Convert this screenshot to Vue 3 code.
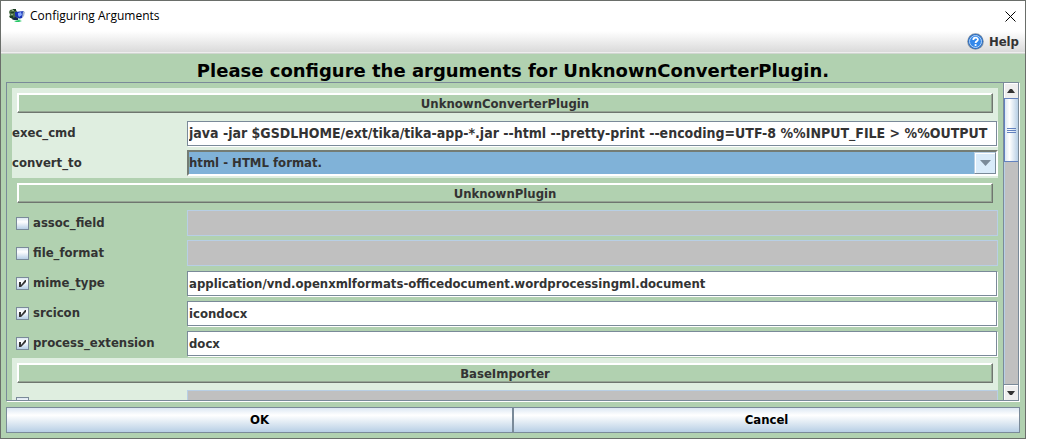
<script setup>
import { reactive, ref } from 'vue'

const groups = reactive([
  {
    name: 'UnknownConverterPlugin',
    tinted: true,
    rows: [
      {
        id: 'exec_cmd',
        kind: 'command',
        required: true,
        value: 'java -jar $GSDLHOME/ext/tika/tika-app-*.jar --html --pretty-print --encoding=UTF-8 %%INPUT_FILE > %%OUTPUT',
      },
      { id: 'convert_to', kind: 'select', required: true, value: 'html - HTML format.' },
    ],
  },
  {
    name: 'UnknownPlugin',
    tinted: false,
    rows: [
      { id: 'assoc_field', kind: 'text', on: false, value: '' },
      { id: 'file_format', kind: 'text', on: false, value: '' },
      {
        id: 'mime_type',
        kind: 'text',
        on: true,
        value: 'application/vnd.openxmlformats-officedocument.wordprocessingml.document',
      },
      { id: 'srcicon', kind: 'text', on: true, value: 'icondocx' },
      { id: 'process_extension', kind: 'text', on: true, value: 'docx' },
    ],
  },
  {
    name: 'BaseImporter',
    tinted: true,
    rows: [{ id: 'base_option', label: '', kind: 'text', on: false, value: '' }],
  },
])

const body = ref(null)
const scroll = (delta) => body.value.scrollBy({ top: delta })
</script>

<template>
  <main class="window">
    <header class="titlebar">
      <svg class="app-icon" viewBox="0 0 16 16" aria-hidden="true">
        <path d="M1 2l4-1 2 1 2 3-2 6-3 1-2-2-2-1 1-2-1-3z" fill="#476b45" />
        <path d="M1 4h4v1H2zM1 8h3v2H1zM4 1h3v2H4z" fill="#1d3f24" />
        <path d="M3 2h2v1H3zM2 6h2v1H2z" fill="#8fae86" />
        <path d="M6 4l9-1v3l-2 4-3 1-4-3z" fill="#1733b8" />
        <path d="M9 5l3-1 1 3-3 2-1-2z" fill="#86a8ff" />
        <path d="M14 3l2 1-1 4-2 2z" fill="#a9b7cf" />
        <path d="M3 10l4-1 4 2-2 1H5z" fill="#15294d" />
        <path d="M5 13l5-1 3 1-3 1H7z" fill="#27c767" />
        <path d="M9 10l3 1-1 1H9z" fill="#b8efd0" />
      </svg>
      <span class="title">Configuring Arguments</span>
      <button class="close" type="button" aria-label="Close">
        <svg viewBox="0 0 11 11"><path d="M.5.5l10 10M10.5.5l-10 10" stroke="#000" fill="none" /></svg>
      </button>
    </header>

    <nav class="menubar">
      <button class="help" type="button">
        <svg viewBox="0 0 17 17" aria-hidden="true">
          <circle cx="8.5" cy="8.5" r="8.3" fill="#8795a5" />
          <circle cx="8.5" cy="8.5" r="7.5" fill="#2b6fc4" />
          <circle cx="8.5" cy="8.5" r="6" fill="#3388ea" stroke="#b5d5fa" stroke-width="1" />
          <path d="M6.3 7c0-3.2 4.6-3 4.6-.4 0 1.7-2.3 1.7-2.3 3.3" fill="none" stroke="#fff" stroke-width="1.8" />
          <circle cx="8.6" cy="12" r="1.1" fill="#fff" />
        </svg>
        Help
      </button>
    </nav>

    <section class="content">
      <h1>Please configure the arguments for UnknownConverterPlugin.</h1>

      <div class="pane">
        <div ref="body" class="pane-body">
          <section
            v-for="g in groups"
            :key="g.name"
            class="group"
            :class="{ tinted: g.tinted }"
            :aria-labelledby="g.name"
          >
            <div class="group-head"><h2 :id="g.name">{{ g.name }}</h2></div>
            <div v-for="r in g.rows" :key="r.id" class="row">
              <label v-if="r.required" class="name" :for="r.id">{{ r.id }}</label>
              <label v-else class="name optional">
                <span class="tick">
                  <input v-model="r.on" type="checkbox" :aria-label="r.id" />
                  <svg v-if="r.on" viewBox="0 0 13 13" aria-hidden="true">
                    <path d="M3 5h2v3L9 3h1v2L5 10H3z" fill="#333" />
                  </svg>
                </span>
                {{ r.label ?? r.id }}
              </label>

              <div v-if="r.kind === 'select'" class="combo">
                <select :id="r.id" v-model="r.value">
                  <option>html - HTML format.</option>
                </select>
                <span class="combo-arrow">
                  <svg viewBox="0 0 11 6" aria-hidden="true"><path d="M0 0h11L5.5 6z" fill="#7a8a99" /></svg>
                </span>
              </div>
              <input
                v-else
                :id="r.id"
                v-model="r.value"
                class="field"
                :class="{ command: r.kind === 'command' }"
                type="text"
                :aria-label="r.id"
                :disabled="!r.required && !r.on"
              />
            </div>
          </section>
        </div>

        <div class="scrollbar">
          <button class="step up" type="button" aria-label="Scroll up" @click="scroll(-30)">
            <svg viewBox="0 0 8 4"><path d="M3 0h2l3 4H0z" fill="#333" /></svg>
          </button>
          <div class="track"><div class="thumb"><i></i><i></i><i></i></div></div>
          <button class="step down" type="button" aria-label="Scroll down" @click="scroll(30)">
            <svg viewBox="0 0 8 4"><path d="M0 0h8L5 4H3z" fill="#333" /></svg>
          </button>
        </div>
      </div>

      <footer class="actions">
        <button type="button">OK</button>
        <button type="button">Cancel</button>
      </footer>
    </section>
  </main>
</template>

<style>
body {
  margin: 0;
  background: #fff;
}
</style>

<style scoped>
* {
  box-sizing: border-box;
}
.window {
  display: flex;
  flex-direction: column;
  height: 100vh;
  margin-right: 23px;
  border: 1px solid #6a6e6a;
  background: #b1d1b0;
  color: #333;
  font: bold 13px/16px "DejaVu Sans Condensed", "DejaVu Sans", sans-serif;
}
button,
input,
select {
  margin: 0;
  border: 0;
  padding: 0;
  border-radius: 0;
  background: none;
  color: inherit;
  font: inherit;
}
svg {
  display: block;
}
.titlebar {
  display: flex;
  flex: none;
  align-items: center;
  height: 30px;
  padding: 0 9px 0 8px;
  background: #fff;
  color: #000;
  font: 12px/16px "Open Sans", "Noto Sans", sans-serif;
}
.app-icon {
  width: 16px;
  height: 16px;
  margin-right: 5px;
}
.title {
  flex: 1;
}
.close svg {
  width: 11px;
  height: 11px;
}
.menubar {
  display: flex;
  flex: none;
  justify-content: flex-end;
  height: 23px;
  padding: 0 6px;
  border-bottom: 1px solid #d0d6d0;
  background: linear-gradient(#fff, #dadada 21px, #eee 21px);
}
.help {
  display: flex;
  gap: 5px;
  align-items: center;
  height: 21px;
}
.help svg {
  width: 17px;
  height: 17px;
}
.content {
  display: flex;
  flex: 1;
  flex-direction: column;
  min-height: 0;
  padding: 6px 5px 5px;
}
h1 {
  flex: none;
  margin: 0;
  color: #000;
  text-align: center;
  font-family: "DejaVu Sans", sans-serif;
  font-size: 18px;
  line-height: 22px;
}
.pane {
  display: flex;
  flex: 1;
  min-height: 0;
  border: 1px solid #7a8a99;
  box-shadow: 1px 1px #fff;
  margin-right: 1px;
}
.pane-body {
  flex: 1;
  min-width: 0;
  padding: 5px;
  overflow: hidden;
}
.tinted {
  background: #dfeee0;
}
.group-head {
  height: 30px;
  padding: 5px;
}
h2 {
  height: 20px;
  margin: 0;
  border: 1px solid;
  border-color: #fff #6f766f #6f766f #fff;
  background: #b1d1b0;
  box-shadow: inset -1px -1px #95a594, inset 1px 1px #fff;
  text-align: center;
  font-size: 13px;
  line-height: 19px;
}
.row {
  display: grid;
  grid-template-columns: 175px 1fr;
  align-items: center;
  height: 30px;
}
.optional {
  display: flex;
  gap: 4px;
  align-items: center;
  padding-left: 4px;
  min-height: 16px;
}
.tick {
  display: grid;
  width: 13px;
  height: 13px;
}
.tick > * {
  grid-area: 1 / 1;
  width: 13px;
  height: 13px;
}
.tick input {
  appearance: none;
  border: 1px solid #7a8a99;
  background: linear-gradient(#dde8f3, #fff 35%, #b8cfe5);
}
.tick svg {
  pointer-events: none;
}
.field {
  width: calc(100% - 1px);
  height: 25px;
  border: 1px solid #7a8a99;
  padding: 0 1px;
  background: #fff;
  box-shadow: 1px 1px #fff;
}
.command {
  font-size: 14px;
}
.field:disabled {
  width: 100%;
  height: 26px;
  border-color: #b8cfe5;
  background: #c0c0c0;
  box-shadow: none;
}
.combo {
  display: flex;
  height: 26px;
  border: 2px solid;
  border-color: #747c74 #fff #fff #747c74;
  background: #80b2d8;
}
.combo select {
  flex: 1;
  min-width: 0;
  appearance: none;
}
.combo-arrow {
  display: grid;
  place-items: center;
  width: 22px;
  border: 1px solid;
  border-color: #b8cfe5 #7a8a99 #7a8a99 #b8cfe5;
  background: #d9ebfa;
  box-shadow: inset 1px 1px #fff;
  pointer-events: none;
}
.combo-arrow svg {
  width: 11px;
  height: 6px;
}
.scrollbar {
  display: flex;
  flex: none;
  flex-direction: column;
  width: 15px;
  border-left: 1px solid #7a8a99;
}
.step {
  display: grid;
  flex: none;
  place-items: center;
  height: 15px;
  background: #eee;
  box-shadow: inset 1px 1px #fff;
}
.down {
  height: 16px;
  border-top: 1px solid #7a8a99;
}
.step svg {
  width: 8px;
  height: 4px;
}
.track {
  flex: 1;
  min-height: 0;
  border-left: 1px solid #b8cfe5;
  background: #c0c0c0;
}
.thumb {
  display: flex;
  flex-direction: column;
  gap: 1px;
  align-items: center;
  justify-content: center;
  height: 64px;
  margin-left: -1px;
  border: 1px solid #6382bf;
  border-right: 0;
  background: linear-gradient(90deg, #dde8f3, #fff 35%, #b8cfe5);
}
.thumb i {
  width: 9px;
  height: 1px;
  background: #6382bf;
}
.actions {
  display: grid;
  flex: none;
  grid-template-columns: 1fr 1fr;
  margin-top: 6px;
}
.actions button {
  height: 26px;
  border: 1px solid #7a8a99;
  background: linear-gradient(#dde8f3, #fff 30%, #b8cfe5);
  color: #000;
}
</style>
